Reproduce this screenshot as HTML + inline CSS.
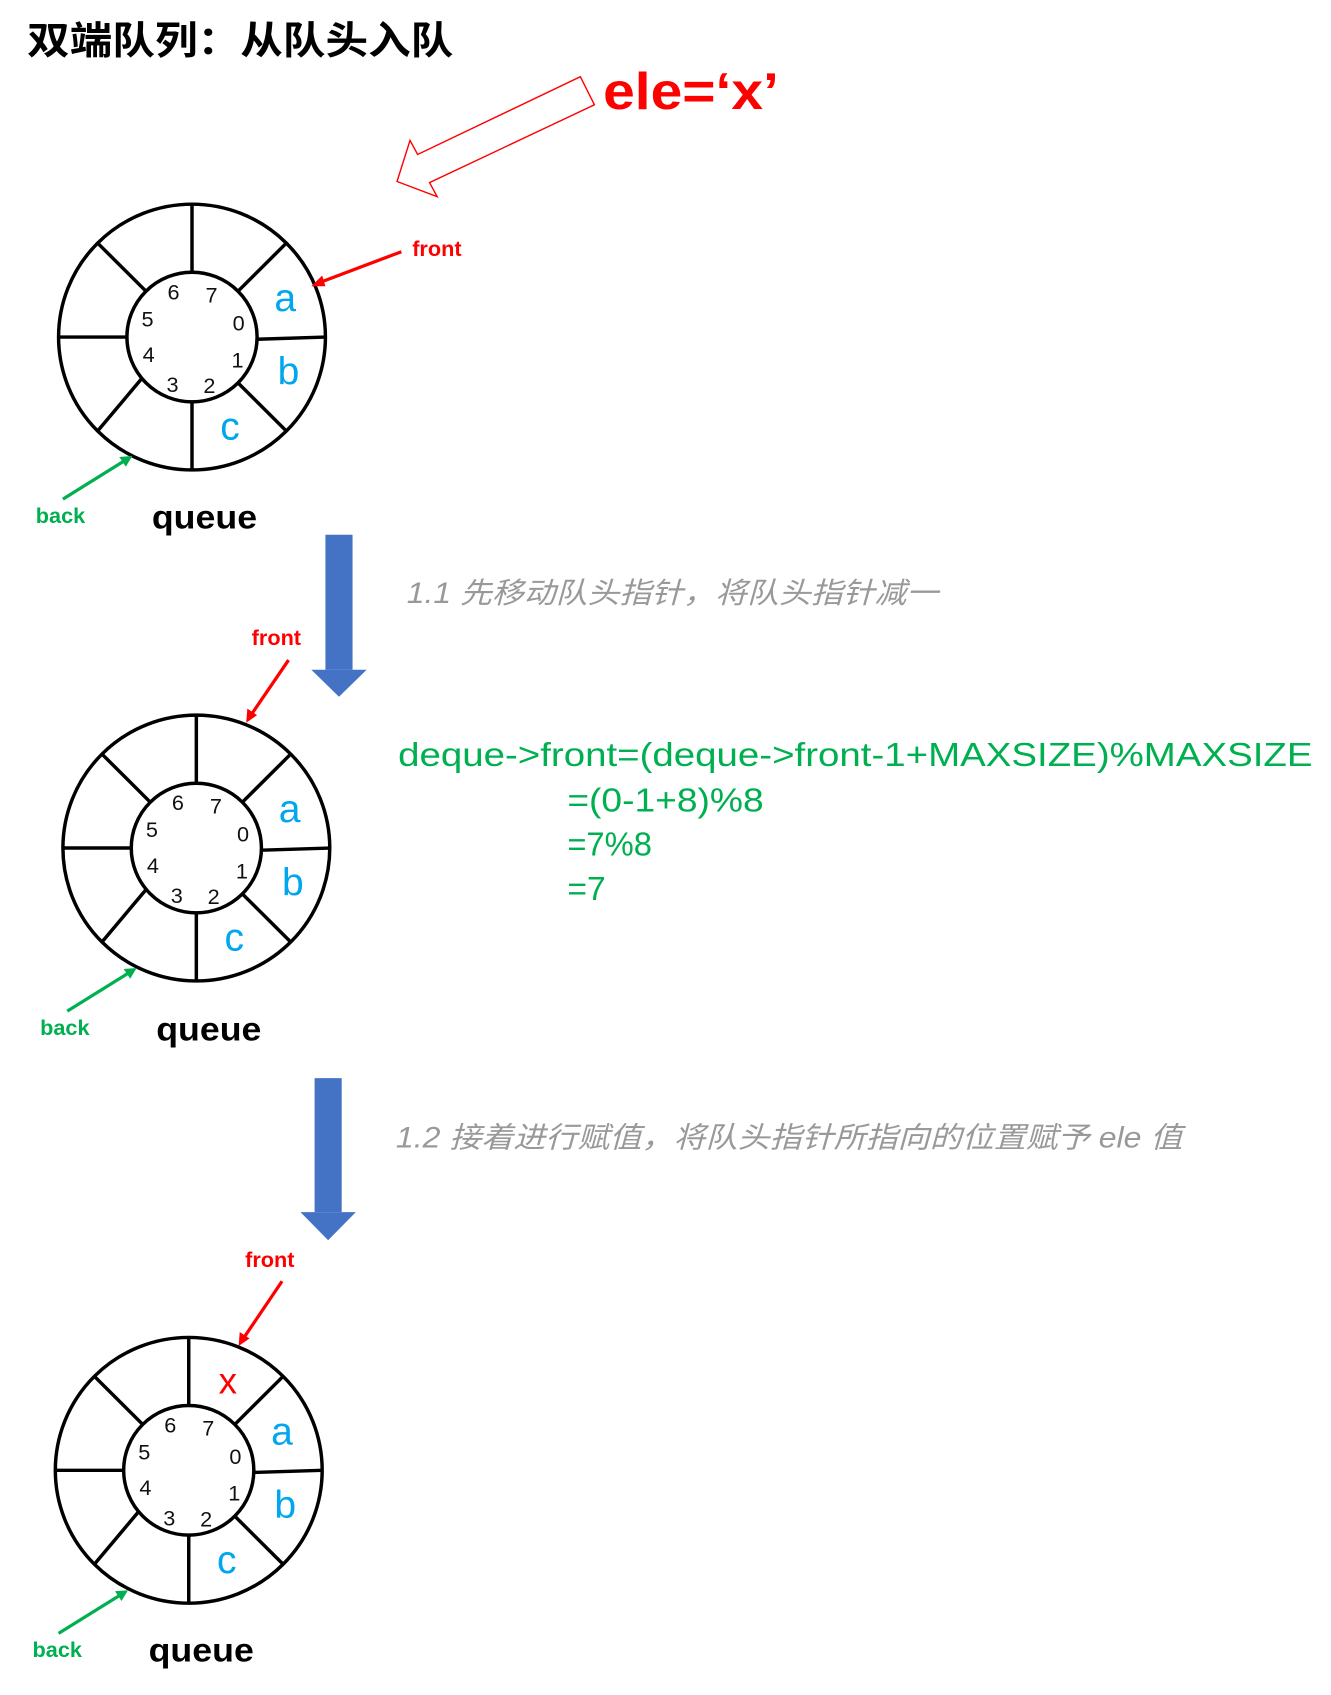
<!DOCTYPE html>
<html><head><meta charset="utf-8"><style>
html,body{margin:0;padding:0;background:#fff;width:1331px;height:1695px;overflow:hidden}
svg{display:block}
</style></head><body>
<svg width="1331" height="1695" viewBox="0 0 1227 1569" preserveAspectRatio="none" xmlns="http://www.w3.org/2000/svg">
<defs>
<g id="ring">
<circle cx="0" cy="0" r="123" fill="none" stroke="#000" stroke-width="3.2"/>
<circle cx="0" cy="0" r="60" fill="none" stroke="#000" stroke-width="3.2"/>
<g stroke="#000" stroke-width="3.2">
<line x1="0" y1="-123" x2="0" y2="-60"/>
<line x1="42" y1="-42" x2="87" y2="-87"/>
<line x1="60" y1="2" x2="123" y2="0"/>
<line x1="42" y1="42" x2="87" y2="87"/>
<line x1="0" y1="60" x2="0" y2="123"/>
<line x1="-46" y1="38" x2="-87" y2="87"/>
<line x1="-60" y1="0" x2="-123" y2="0"/>
<line x1="-42" y1="-42" x2="-87" y2="-87"/>
</g>
<g font-family="Liberation Sans, sans-serif" font-size="20" fill="#111" text-anchor="middle">
<text x="-17" y="-35">6</text><text x="18" y="-32">7</text>
<text x="43" y="-6">0</text><text x="42" y="28">1</text>
<text x="16" y="52">2</text><text x="-18" y="51">3</text>
<text x="-40" y="23">4</text><text x="-41" y="-10">5</text>
</g>
<g font-family="Liberation Sans, sans-serif" font-size="36" fill="#00a6ee" text-anchor="middle">
<text x="86" y="-24">a</text><text x="89" y="44">b</text><text x="35" y="95">c</text>
</g>
</g>
</defs>

<text x="25" y="50" font-family="Liberation Sans, 'Noto Sans CJK SC', sans-serif" font-weight="bold" font-size="36" fill="#000" textLength="393" lengthAdjust="spacingAndGlyphs">双端队列：从队头入队</text>

<text x="556" y="101" font-family="Liberation Sans, sans-serif" font-weight="bold" font-size="48" fill="#ff0000" textLength="162" lengthAdjust="spacingAndGlyphs">ele=‘x’</text>
<polygon points="535,71 548,97 396,169 403,182 366,168 378,130 385,143" fill="#fff" stroke="#ff0000" stroke-width="1.3"/>

<!-- circle 1 -->
<use href="#ring" transform="translate(177,312)"/>
<text x="380" y="237" font-family="Liberation Sans, sans-serif" font-weight="bold" font-size="20" fill="#ff0000">front</text>
<line x1="370" y1="233" x2="296" y2="261" stroke="#ff0000" stroke-width="3"/>
<polygon points="287,265 297,255 300,265" fill="#ff0000"/>
<text x="33" y="484" font-family="Liberation Sans, sans-serif" font-weight="bold" font-size="20" fill="#00b050">back</text>
<line x1="58" y1="462" x2="114" y2="427" stroke="#00b050" stroke-width="3"/>
<polygon points="122,422 110,423 116,432" fill="#00b050"/>
<text x="140" y="489" font-family="Liberation Sans, sans-serif" font-weight="bold" font-size="31" fill="#000" textLength="97" lengthAdjust="spacingAndGlyphs">queue</text>

<!-- arrow 1 -->
<rect x="300" y="495" width="25" height="125" fill="#4472c4"/>
<polygon points="287,620 338,620 312.5,645" fill="#4472c4"/>
<text x="375" y="558" font-family="Liberation Sans, 'Noto Sans CJK SC', sans-serif" font-style="italic" font-size="27" fill="#999" textLength="490" lengthAdjust="spacingAndGlyphs">1.1 先移动队头指针，将队头指针减一</text>

<!-- circle 2 -->
<use href="#ring" transform="translate(181,785)"/>
<text x="232" y="597" font-family="Liberation Sans, sans-serif" font-weight="bold" font-size="20" fill="#ff0000">front</text>
<line x1="266" y1="611" x2="232" y2="661" stroke="#ff0000" stroke-width="3"/>
<polygon points="227,669 228,656 237,662" fill="#ff0000"/>
<text x="37" y="958" font-family="Liberation Sans, sans-serif" font-weight="bold" font-size="20" fill="#00b050">back</text>
<line x1="62" y1="936" x2="118" y2="901" stroke="#00b050" stroke-width="3"/>
<polygon points="126,896 114,897 120,906" fill="#00b050"/>
<text x="144" y="963" font-family="Liberation Sans, sans-serif" font-weight="bold" font-size="31" fill="#000" textLength="97" lengthAdjust="spacingAndGlyphs">queue</text>

<g font-family="Liberation Sans, sans-serif" font-size="31" fill="#00b050">
<text x="367" y="709" textLength="843" lengthAdjust="spacingAndGlyphs">deque-&gt;front=(deque-&gt;front-1+MAXSIZE)%MAXSIZE</text>
<text x="523" y="751" textLength="181" lengthAdjust="spacingAndGlyphs">=(0-1+8)%8</text>
<text x="523" y="792" textLength="78" lengthAdjust="spacingAndGlyphs">=7%8</text>
<text x="523" y="833">=7</text>
</g>

<!-- arrow 2 -->
<rect x="290" y="998" width="25" height="124" fill="#4472c4"/>
<polygon points="277,1122 328,1122 302.5,1148" fill="#4472c4"/>
<text x="365" y="1062" font-family="Liberation Sans, 'Noto Sans CJK SC', sans-serif" font-style="italic" font-size="27" fill="#999" textLength="725" lengthAdjust="spacingAndGlyphs">1.2 接着进行赋值，将队头指针所指向的位置赋予 ele 值</text>

<!-- circle 3 -->
<use href="#ring" transform="translate(174,1361)"/>
<text x="210" y="1290" font-family="Liberation Sans, sans-serif" font-size="34" fill="#ff0000" text-anchor="middle">x</text>
<text x="226" y="1173" font-family="Liberation Sans, sans-serif" font-weight="bold" font-size="20" fill="#ff0000">front</text>
<line x1="260" y1="1186" x2="225" y2="1238" stroke="#ff0000" stroke-width="3"/>
<polygon points="220,1246 221,1233 230,1239" fill="#ff0000"/>
<text x="30" y="1534" font-family="Liberation Sans, sans-serif" font-weight="bold" font-size="20" fill="#00b050">back</text>
<line x1="54" y1="1512" x2="110" y2="1477" stroke="#00b050" stroke-width="3"/>
<polygon points="118,1472 106,1473 112,1482" fill="#00b050"/>
<text x="137" y="1538" font-family="Liberation Sans, sans-serif" font-weight="bold" font-size="31" fill="#000" textLength="97" lengthAdjust="spacingAndGlyphs">queue</text>
</svg>
</body></html>
